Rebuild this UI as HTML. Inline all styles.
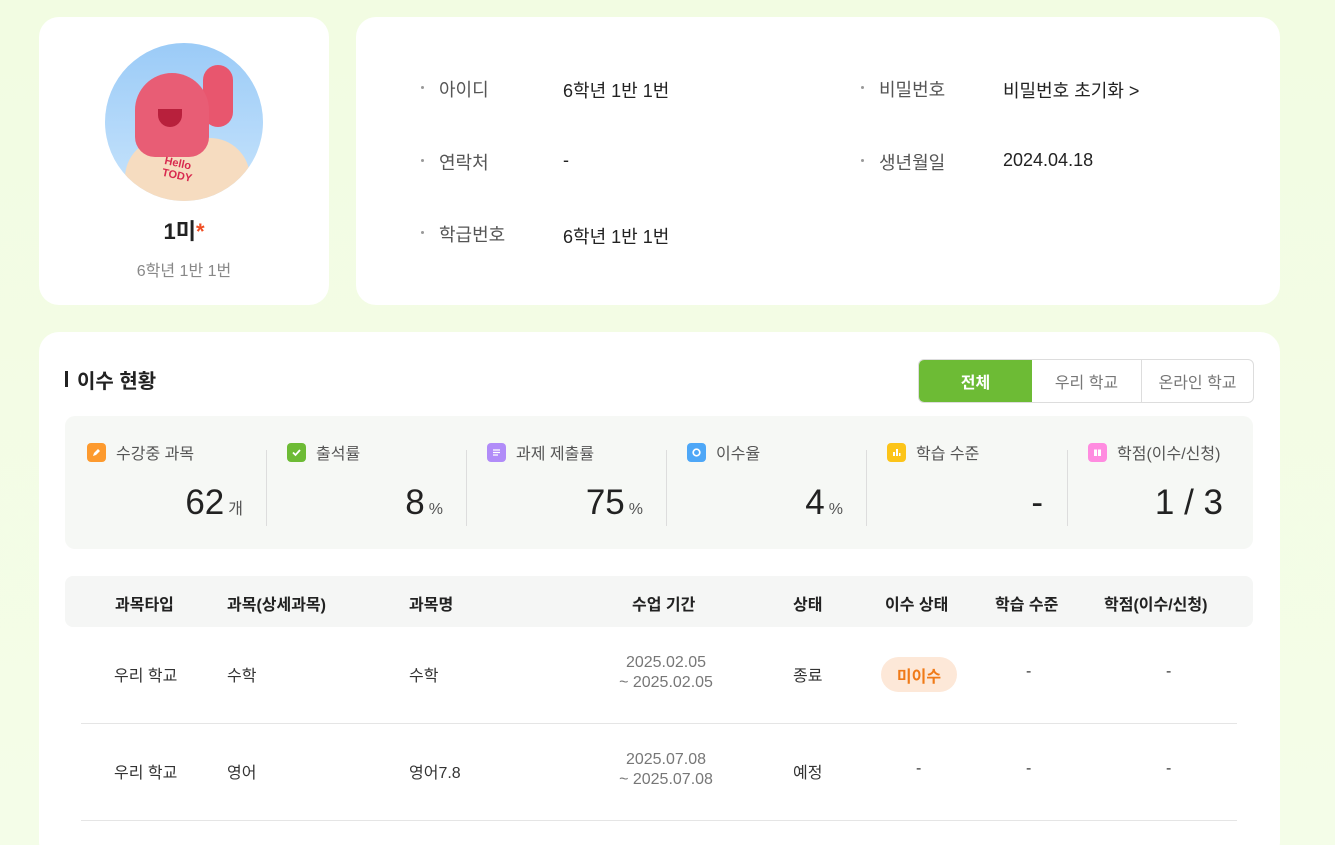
<!DOCTYPE html>
<html><head><meta charset="utf-8"><style>
*{margin:0;padding:0;box-sizing:border-box}
html,body{width:1335px;height:845px;overflow:hidden}
body{background:linear-gradient(180deg,#f2fce2,#f4fde8);font-family:"Liberation Sans","Noto Sans CJK KR",sans-serif;color:#222;position:relative}
.card{position:absolute;background:#fff;border-radius:20px}
.abs{position:absolute}
.lbl{position:absolute;font-size:18px;color:#555}
.lbl:before{content:"";position:absolute;left:-18px;top:10px;width:3px;height:3px;border-radius:50%;background:#999}
.val{position:absolute;font-size:18px;color:#222}
.stat{position:absolute;top:416px;width:200px;height:133px}
.stat .t{position:absolute;left:22px;top:24px;font-size:16px;color:#555;display:flex;align-items:center}
.ic{width:19px;height:19px;border-radius:4px;margin-right:10px;display:inline-flex;align-items:center;justify-content:center}
.stat .n{position:absolute;right:22px;top:67px;font-size:35px;color:#222}
.stat .n small{font-size:16px;color:#555;margin-left:4px}
.div{position:absolute;top:450px;width:1px;height:76px;background:#ddd}
.th{position:absolute;top:591px;font-size:16px;color:#222;font-weight:bold}
.td{position:absolute;font-size:16px;color:#333}
.dt{position:absolute;font-size:16px;color:#777;text-align:center;width:160px;line-height:20px}
</style></head><body>
<div class="card" style="left:39px;top:17px;width:290px;height:288px">
 <div class="abs" style="left:66px;top:26px;width:158px;height:158px;border-radius:50%;background:linear-gradient(180deg,#9bcbf7,#c8e4fc);overflow:hidden">
  <div class="abs" style="left:20px;top:95px;width:125px;height:90px;border-radius:40px 40px 0 0;background:#f6dcc0"></div>
  <div class="abs" style="left:98px;top:22px;width:30px;height:62px;border-radius:15px;background:#e8566e"></div>
  <div class="abs" style="left:30px;top:30px;width:74px;height:84px;border-radius:37px 37px 20px 20px;background:#e85d75"></div>
  <div class="abs" style="left:53px;top:66px;width:24px;height:18px;border-radius:0 0 12px 12px;background:#b8203c"></div>
  <div class="abs" style="left:58px;top:115px;font-size:11px;font-weight:bold;color:#d8294e;transform:rotate(12deg)">Hello<br>TODY</div>
 </div>
 <div class="abs" style="left:0;width:290px;top:197px;text-align:center;font-size:22px;font-weight:bold">1미<span style="color:#f04e23">*</span></div>
 <div class="abs" style="left:0;width:290px;top:240px;text-align:center;font-size:16px;color:#888">6학년 1반 1번</div>
</div>
<div class="card" style="left:356px;top:17px;width:924px;height:288px"></div>
<div class="lbl" style="left:439px;top:76px">아이디</div><div class="val" style="left:563px;top:77px">6학년 1반 1번</div>
<div class="lbl" style="left:439px;top:149px">연락처</div><div class="val" style="left:563px;top:150px">-</div>
<div class="lbl" style="left:439px;top:221px">학급번호</div><div class="val" style="left:563px;top:223px">6학년 1반 1번</div>
<div class="lbl" style="left:879px;top:76px">비밀번호</div><div class="val" style="left:1003px;top:77px">비밀번호 초기화 &gt;</div>
<div class="lbl" style="left:879px;top:149px">생년월일</div><div class="val" style="left:1003px;top:150px">2024.04.18</div>

<div class="card" style="left:39px;top:332px;width:1241px;height:530px"></div>
<div class="abs" style="left:65px;top:371px;width:3px;height:16px;background:#222"></div>
<div class="abs" style="left:77px;top:365px;font-size:20px;font-weight:bold">이수 현황</div>
<div class="abs" style="left:918px;top:359px;width:336px;height:44px;border:1px solid #ddd;border-radius:6px;overflow:hidden;display:flex;font-size:16px;color:#777">
 <div style="width:113px;background:#6dbb35;color:#fff;font-weight:bold;display:flex;align-items:center;justify-content:center">전체</div>
 <div style="width:110px;border-right:1px solid #ddd;display:flex;align-items:center;justify-content:center">우리 학교</div>
 <div style="flex:1;display:flex;align-items:center;justify-content:center">온라인 학교</div>
</div>
<div class="abs" style="left:65px;top:416px;width:1188px;height:133px;background:#f6f8f5;border-radius:10px"></div>
<div class="stat" style="left:65px"><div class="t"><span class="ic" style="background:#fd9a2e"><svg width="11" height="11" viewBox="0 0 11 11"><path d="M2 9l1-3 4-4 2 2-4 4z" fill="#fff"/></svg></span>수강중 과목</div><div class="n">62<small>개</small></div></div>
<div class="div" style="left:266px"></div>
<div class="stat" style="left:265px"><div class="t"><span class="ic" style="background:#6dbb35"><svg width="11" height="11" viewBox="0 0 11 11"><path d="M2 5.5l2.5 2.5 4.5-5" stroke="#fff" stroke-width="1.8" fill="none"/></svg></span>출석률</div><div class="n">8<small>%</small></div></div>
<div class="div" style="left:466px"></div>
<div class="stat" style="left:465px"><div class="t"><span class="ic" style="background:#b18cf8"><svg width="11" height="11" viewBox="0 0 11 11"><path d="M2 3h7M2 5.5h7M2 8h5" stroke="#fff" stroke-width="1.3"/></svg></span>과제 제출률</div><div class="n">75<small>%</small></div></div>
<div class="div" style="left:666px"></div>
<div class="stat" style="left:665px"><div class="t"><span class="ic" style="background:#4ea7f7"><svg width="11" height="11" viewBox="0 0 11 11"><circle cx="5.5" cy="5.5" r="3.3" stroke="#fff" stroke-width="1.7" fill="none"/></svg></span>이수율</div><div class="n">4<small>%</small></div></div>
<div class="div" style="left:866px"></div>
<div class="stat" style="left:865px"><div class="t"><span class="ic" style="background:#fcc419"><svg width="11" height="11" viewBox="0 0 11 11"><path d="M2 5v4h2V5zM5 2v7h2V2zM8 6v3h1.5V6z" fill="#fff"/></svg></span>학습 수준</div><div class="n">-</div></div>
<div class="div" style="left:1067px"></div>
<div class="stat" style="left:1066px;width:187px"><div class="t"><span class="ic" style="background:#ff8ce0"><svg width="11" height="11" viewBox="0 0 11 11"><path d="M2 2.5h3v6.5H2zM6 2.5h3v6.5H6z" fill="#fff"/></svg></span>학점(이수/신청)</div><div class="n" style="right:30px">1 / 3</div></div>

<div class="abs" style="left:65px;top:576px;width:1188px;height:51px;background:#f5f6f5;border-radius:8px"></div>
<div class="th" style="left:115px">과목타입</div><div class="th" style="left:227px">과목(상세과목)</div><div class="th" style="left:409px">과목명</div><div class="th" style="left:632px">수업 기간</div><div class="th" style="left:793px">상태</div><div class="th" style="left:885px">이수 상태</div><div class="th" style="left:995px">학습 수준</div><div class="th" style="left:1104px">학점(이수/신청)</div>

<div class="td" style="left:114px;top:662px">우리 학교</div><div class="td" style="left:227px;top:662px">수학</div><div class="td" style="left:409px;top:662px">수학</div>
<div class="dt" style="left:586px;top:653px">2025.02.05<br>~ 2025.02.05</div>
<div class="td" style="left:793px;top:662px">종료</div>
<div class="abs" style="left:881px;top:657px;width:76px;height:35px;border-radius:18px;background:#fde8d8;color:#f07a18;font-weight:bold;font-size:16px;display:flex;align-items:center;justify-content:center">미이수</div>
<div class="td" style="left:1026px;top:663px">-</div><div class="td" style="left:1166px;top:663px">-</div>
<div class="abs" style="left:81px;top:723px;width:1156px;height:1px;background:#e5e5e5"></div>
<div class="td" style="left:114px;top:759px">우리 학교</div><div class="td" style="left:227px;top:759px">영어</div><div class="td" style="left:409px;top:759px">영어7.8</div>
<div class="dt" style="left:586px;top:750px">2025.07.08<br>~ 2025.07.08</div>
<div class="td" style="left:793px;top:759px">예정</div>
<div class="td" style="left:916px;top:760px">-</div><div class="td" style="left:1026px;top:760px">-</div><div class="td" style="left:1166px;top:760px">-</div>
<div class="abs" style="left:81px;top:820px;width:1156px;height:1px;background:#e5e5e5"></div>
</body></html>
